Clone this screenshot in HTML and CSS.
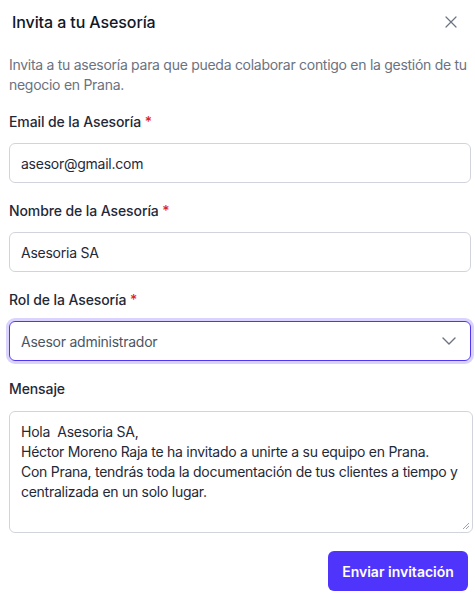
FILE: index.html
```html
<!DOCTYPE html>
<html lang="es">
<head>
<meta charset="utf-8">
<link rel="stylesheet" href="styles.css">
</head>
<body>
<div class="dialog">
  <div class="header">
    <h1 class="title">Invita a tu Asesoría</h1>
    <button class="close" aria-label="Cerrar">
      <svg width="12" height="12" viewBox="0 0 12 12"><path d="M1 1L11 11M11 1L1 11" stroke="#6b7280" stroke-width="1.2" stroke-linecap="round"/></svg>
    </button>
  </div>
  <div class="content">
    <p class="desc">Invita a tu asesoría para que pueda colaborar contigo en la gestión de tu negocio en Prana.</p>
    <div class="field">
      <label class="label">Email de la Asesoría <span class="req">*</span></label>
      <div class="input">asesor@gmail.com</div>
    </div>
    <div class="field">
      <label class="label">Nombre de la Asesoría <span class="req">*</span></label>
      <div class="input">Asesoria SA</div>
    </div>
    <div class="field field-role">
      <label class="label">Rol de la Asesoría <span class="req">*</span></label>
      <div class="input select">
        <span>Asesor administrador</span>
        <svg width="14" height="8" viewBox="0 0 14 8"><path d="M1 1L7 7L13 1" fill="none" stroke="#6b7280" stroke-width="1.4" stroke-linecap="round" stroke-linejoin="round"/></svg>
      </div>
    </div>
    <div class="field">
      <label class="label label-msg">Mensaje</label>
      <div class="textarea">
        <div>Hola&nbsp; Asesoria SA,</div>
        <div>Héctor Moreno Raja te ha invitado a unirte a su equipo en Prana.</div>
        <div>Con Prana, tendrás toda la documentación de tus clientes a tiempo y centralizada en un solo lugar.</div>
        <svg class="grip" width="8" height="8" viewBox="0 0 8 8"><path d="M7 1L1 7M7 4L4 7" stroke="#9ca3af" stroke-width="1"/></svg>
      </div>
    </div>
    <div class="actions">
      <button class="submit">Enviar invitación</button>
    </div>
  </div>
</div>
</body>
</html>
```
FILE: styles.css
```css
* { box-sizing: border-box; }
html, body { margin: 0; padding: 0; background: #ffffff; }
body {
  font-family: Inter, "Noto Sans", sans-serif;
  color: #1f2937;
  width: 475px;
  height: 602px;
  overflow: hidden;
}
.dialog { width: 475px; }
.header {
  display: flex;
  align-items: center;
  justify-content: space-between;
  height: 43px;
  padding: 0 18px 0 12px;
}
.title {
  margin: 0;
  font-size: 16px;
  font-weight: 500;
  color: #111827;
  letter-spacing: -0.1px;
}
.close {
  background: none;
  border: 0;
  padding: 0;
  display: flex;
  cursor: pointer;
}
.content { padding: 12px 4px 0 9px; }
.desc {
  margin: 0 0 17px;
  font-size: 14px;
  line-height: 20px;
  color: #6b7280;
  letter-spacing: -0.28px;
}
.field { margin-bottom: 18px; }
.field-role { margin-top: 1px; }
.label {
  display: block;
  font-size: 14px;
  line-height: 20px;
  font-weight: 500;
  color: #1f2937;
  margin-bottom: 11px;
  letter-spacing: -0.1px;
}
.label-msg { margin-bottom: 12px; }
.req { color: #dc2626; }
.input {
  height: 40px;
  border: 1px solid #d1d5db;
  border-radius: 6px;
  padding: 0 11px;
  display: flex;
  align-items: center;
  font-size: 14px;
  color: #1f2937;
  letter-spacing: -0.25px;
}
.select {
  justify-content: space-between;
  border-color: #4f35f5;
  box-shadow: 0 0 0 3px #d9d3fd;
  color: #4b5563;
  padding-right: 14px;
}
.textarea {
  position: relative;
  height: 122px;
  width: 464px;
  border: 1px solid #d1d5db;
  border-radius: 6px;
  padding: 10px 4px 10px 11px;
  font-size: 14px;
  line-height: 20px;
  color: #1f2937;
  letter-spacing: -0.27px;
}
.grip { position: absolute; right: 2px; bottom: 2px; }
.actions {
  display: flex;
  justify-content: flex-end;
  padding-right: 3px;
}
.submit {
  height: 40px;
  width: 140px;
  border: 0;
  border-radius: 6px;
  background: #4f35fc;
  color: #ffffff;
  font-family: Inter, "Noto Sans", sans-serif;
  font-size: 14px;
  font-weight: 600;
  cursor: pointer;
}
```
